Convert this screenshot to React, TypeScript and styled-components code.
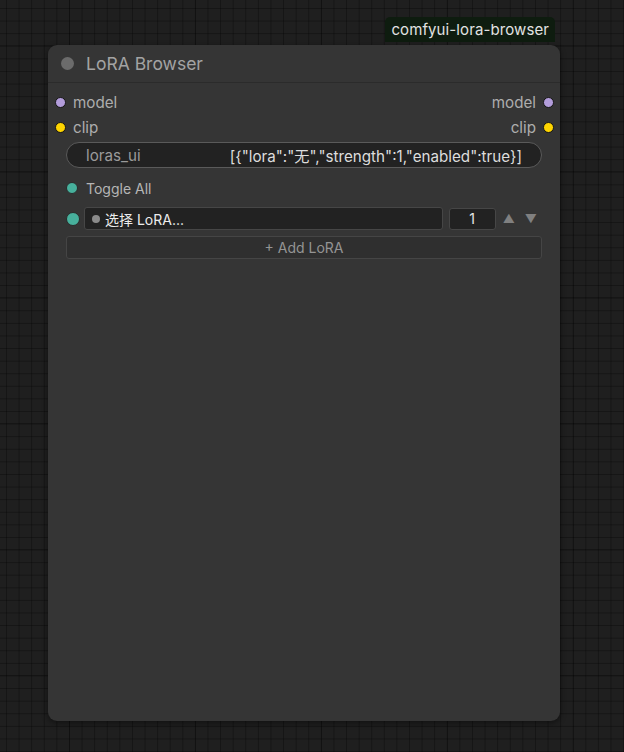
import styled, { createGlobalStyle } from "styled-components";

const GlobalStyle = createGlobalStyle`
  html, body {
    margin: 0;
    padding: 0;
    height: 100%;
  }
  body {
    font-family: Inter, "Noto Sans CJK SC", "Liberation Sans", sans-serif;
    background: #1e1e1e;
  }
  #root {
    height: 100%;
  }
`;

const Canvas = styled.div`
  width: 624px;
  height: 752px;
  overflow: hidden;
  background-color: #1f1f1f;
  background-image:
    linear-gradient(to right, rgba(0, 0, 0, 0.22) 1px, transparent 1px),
    linear-gradient(to bottom, rgba(0, 0, 0, 0.22) 1px, transparent 1px),
    linear-gradient(to right, rgba(0, 0, 0, 0.3) 1px, transparent 1px),
    linear-gradient(to bottom, rgba(0, 0, 0, 0.3) 1px, transparent 1px);
  background-size: 126px 126px, 126px 126px, 12.6px 12.6px, 12.6px 12.6px;
  background-position: -57px 45px, -57px 45px, 6px 8px, 6px 8px;
  padding: 17px 64px 0 48px;
  box-sizing: border-box;
  display: flex;
  flex-direction: column;
  align-items: stretch;
`;

const BadgeRow = styled.div`
  display: flex;
  justify-content: flex-end;
  padding-right: 5px;
`;

const Badge = styled.div`
  background: #0e1c0f;
  color: #e2e2e2;
  font-size: 15px;
  line-height: 25px;
  height: 25px;
  padding: 0 6px;
  border-radius: 5px 5px 0 0;
  letter-spacing: 0.1px;
`;

const Node = styled.div`
  height: 676px;
  margin-top: 3px;
  background: #353535;
  border-radius: 9px;
  box-shadow: 0 2px 6px rgba(0, 0, 0, 0.45);
  display: flex;
  flex-direction: column;
  color: #aaaaaa;
`;

const TitleBar = styled.div`
  height: 38px;
  display: flex;
  align-items: center;
  gap: 12px;
  padding-left: 13px;
  border-bottom: 1px solid #2b2b2b;
  box-sizing: border-box;
`;

const TitleDot = styled.span`
  width: 13px;
  height: 13px;
  border-radius: 50%;
  background: #6b6b6b;
`;

const Title = styled.span`
  font-size: 17.5px;
  color: #a3a3a3;
`;

const Body = styled.div`
  padding: 7px 6px 0 7px;
  display: flex;
  flex-direction: column;
`;

const SlotRow = styled.div`
  height: 25px;
  display: flex;
  align-items: center;
  justify-content: space-between;
`;

const Slot = styled.div<{ $right?: boolean }>`
  display: flex;
  align-items: center;
  gap: 7px;
  flex-direction: ${({ $right }) => ($right ? "row-reverse" : "row")};
  font-size: 15.2px;
  color: #adadad;
`;

const SlotDot = styled.span<{ $color: string }>`
  width: 9px;
  height: 9px;
  border-radius: 50%;
  background: ${({ $color }) => $color};
  border: 1px solid #161616;
`;

const Widgets = styled.div`
  padding: 2px 12px 0 11px;
  display: flex;
  flex-direction: column;
`;

const TextWidget = styled.div`
  height: 26px;
  border: 1px solid #5a5a5a;
  border-radius: 13px;
  background: #222222;
  box-sizing: border-box;
  display: flex;
  align-items: center;
  justify-content: space-between;
  padding: 0 19px 0 19px;
  font-size: 15.2px;
`;

const WidgetLabel = styled.span`
  color: #9a9a9a;
`;

const WidgetValue = styled.span`
  color: #dddddd;
`;

const ToggleRow = styled.div`
  margin-top: 9px;
  height: 22px;
  display: flex;
  align-items: center;
  gap: 8px;
  font-size: 14px;
  color: #b5b5b5;
`;

const Toggle = styled.span<{ $size: number }>`
  width: ${({ $size }) => $size}px;
  height: ${({ $size }) => $size}px;
  border-radius: 50%;
  background: #47b09c;
  border: 1px solid #2a2a2a;
  box-sizing: border-box;
  flex: none;
`;

const LoraRow = styled.div`
  margin-top: 8px;
  height: 23px;
  display: flex;
  align-items: center;
  gap: 4px;
  padding-right: 5px;
`;

const Select = styled.div`
  flex: 1;
  height: 23px;
  box-sizing: border-box;
  background: #222222;
  border: 1px solid #464646;
  border-radius: 3px;
  display: flex;
  align-items: center;
  gap: 5px;
  padding-left: 7px;
  font-size: 14px;
  color: #ececec;
`;

const SmallDot = styled.span`
  width: 8px;
  height: 8px;
  border-radius: 50%;
  background: #8a8a8a;
`;

const NumberBox = styled.div`
  width: 47px;
  height: 22px;
  box-sizing: border-box;
  background: #222222;
  border: 1px solid #464646;
  border-radius: 3px;
  display: flex;
  align-items: center;
  justify-content: center;
  font-size: 14px;
  color: #e6e6e6;
  margin-left: 2px;
`;

const Arrows = styled.div`
  display: flex;
  gap: 10px;
  margin-left: 3px;
  color: #808080;
  font-size: 12px;
`;

const AddButton = styled.div`
  margin-top: 6px;
  height: 23px;
  box-sizing: border-box;
  background: #2f2f2f;
  border: 1px solid #454545;
  border-radius: 3px;
  display: flex;
  align-items: center;
  justify-content: center;
  font-size: 14px;
  color: #949494;
`;

export default function App() {
  return (
    <>
      <GlobalStyle />
      <Canvas>
        <BadgeRow>
          <Badge>comfyui-lora-browser</Badge>
        </BadgeRow>
        <Node>
          <TitleBar>
            <TitleDot />
            <Title>LoRA Browser</Title>
          </TitleBar>
          <Body>
            <SlotRow>
              <Slot>
                <SlotDot $color="#b39ddb" />
                model
              </Slot>
              <Slot $right>
                <SlotDot $color="#b39ddb" />
                model
              </Slot>
            </SlotRow>
            <SlotRow>
              <Slot>
                <SlotDot $color="#ffd500" />
                clip
              </Slot>
              <Slot $right>
                <SlotDot $color="#ffd500" />
                clip
              </Slot>
            </SlotRow>
            <Widgets>
              <TextWidget>
                <WidgetLabel>loras_ui</WidgetLabel>
                <WidgetValue>[{'{'}"lora":"无","strength":1,"enabled":true{'}'}]</WidgetValue>
              </TextWidget>
              <ToggleRow>
                <Toggle $size={12} />
                Toggle All
              </ToggleRow>
              <LoraRow>
                <Toggle $size={14} />
                <Select>
                  <SmallDot />
                  选择 LoRA...
                </Select>
                <NumberBox>1</NumberBox>
                <Arrows>
                  <span>▲</span>
                  <span>▼</span>
                </Arrows>
              </LoraRow>
              <AddButton>+ Add LoRA</AddButton>
            </Widgets>
          </Body>
        </Node>
      </Canvas>
    </>
  );
}
